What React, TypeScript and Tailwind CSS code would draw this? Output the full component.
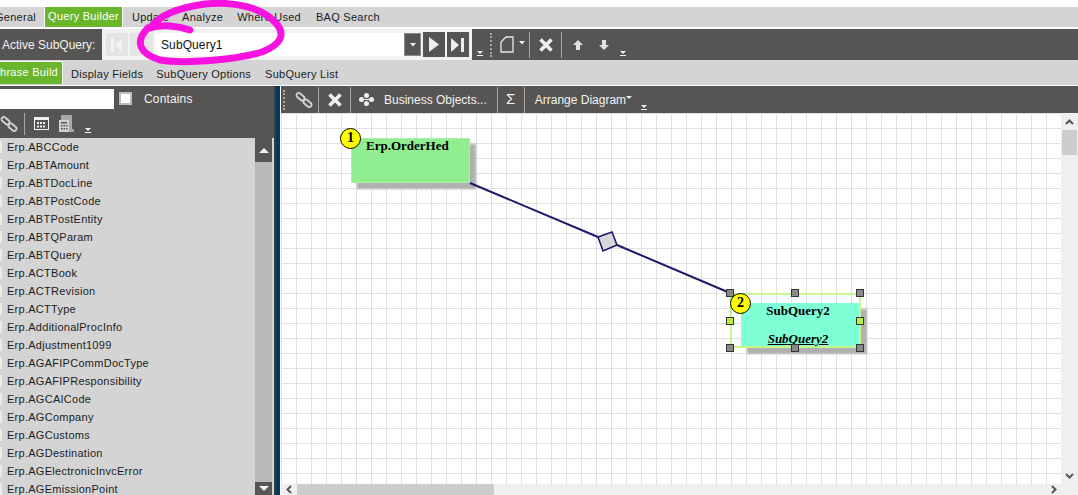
import React from "react";

const tables = [
  "Erp.ABCCode",
  "Erp.ABTAmount",
  "Erp.ABTDocLine",
  "Erp.ABTPostCode",
  "Erp.ABTPostEntity",
  "Erp.ABTQParam",
  "Erp.ABTQuery",
  "Erp.ACTBook",
  "Erp.ACTRevision",
  "Erp.ACTType",
  "Erp.AdditionalProcInfo",
  "Erp.Adjustment1099",
  "Erp.AGAFIPCommDocType",
  "Erp.AGAFIPResponsibility",
  "Erp.AGCAICode",
  "Erp.AGCompany",
  "Erp.AGCustoms",
  "Erp.AGDestination",
  "Erp.AGElectronicInvcError",
  "Erp.AGEmissionPoint",
];

const LinkIcon = () => (
  <svg width="18" height="18" viewBox="0 0 18 18" fill="none" stroke="#d4d4d4" strokeWidth="1.8">
    <rect x="1" y="3.5" width="9" height="4.5" rx="2.2" transform="rotate(40 5.5 5.75)" />
    <rect x="8" y="10" width="9" height="4.5" rx="2.2" transform="rotate(40 12.5 12.25)" />
  </svg>
);

const CloseIcon = () => (
  <svg width="14" height="14" viewBox="0 0 14 14" stroke="#eeeeee" strokeWidth="3.6">
    <path d="M1.5 1.5 L12.5 12.5 M12.5 1.5 L1.5 12.5" />
  </svg>
);

const MoreCaret = ({ className = "" }: { className?: string }) => (
  <svg width="6" height="5" viewBox="0 0 6 5" className={className} fill="#f2f2f2">
    <path d="M0 0 H6 L3 3 Z" />
    <rect x="0" y="4" width="6" height="1" />
  </svg>
);

const Sep = () => <div className="h-[26px] w-px bg-[#a8a6a4]" />;

const Handle = ({ pos, lime }: { pos: string; lime?: boolean }) => (
  <div
    className={`absolute h-[8px] w-[8px] border border-[#333] ${pos} ${lime ? "bg-[#b4f03c]" : "bg-[#8a8a8a]"}`}
  />
);

const Badge = ({ n, pos }: { n: number; pos: string }) => (
  <div
    className={`absolute flex h-[21px] w-[21px] items-center justify-center rounded-full border border-black bg-[#ffff00] pb-[2px] font-['Liberation_Serif',serif] text-[14px] font-bold tracking-normal text-black ${pos}`}
  >
    {n}
  </div>
);

export default function App() {
  return (
    <div className="relative flex h-[495px] w-[1078px] flex-col overflow-hidden bg-white pt-[7px] font-['Liberation_Sans',sans-serif] text-[11px] tracking-[0.27px] text-[#1c1c1c]">
      {/* Main tabs */}
      <div className="flex h-[20px] items-center bg-[#d4d4d4]">
        <span className="ml-[-5px] w-[49px] pt-[1px]">General</span>
        <div className="flex h-[20px] w-[79px] items-center justify-center border-x border-white bg-[#69b52b] pb-[2px] text-white">
          Query Builder
        </div>
        <span className="ml-[9px] pt-[1px]">Update</span>
        <span className="ml-[13px] pt-[1px]">Analyze</span>
        <span className="ml-[14px] pt-[1px]">Where Used</span>
        <span className="ml-[15px] pt-[1px]">BAQ Search</span>
      </div>

      {/* SubQuery toolbar */}
      <div className="mt-[2px] flex h-[31px] items-center bg-[#575553] text-[#f2f2f2]">
        <span className="ml-[2px] w-[100px] text-[12px] tracking-normal">Active SubQuery:</span>
        <div className="flex h-[31px] w-[370px] items-center bg-[#f1f1f1] pl-[4px]">
          <div className="flex h-[23px] w-[22px] items-center justify-center bg-[#e4e4e4]">
            <svg width="12" height="14" viewBox="0 0 12 14" fill="#f4f4f4">
              <path d="M0 0 H3 V14 H0 Z M11 0 V14 L4 7 Z" />
            </svg>
          </div>
          <div className="ml-[2px] h-[23px] w-[23px] bg-[#e4e4e4]" />
          <div className="ml-[2px] flex h-[23px] w-[249px] items-center bg-white pl-[6px] text-[12px] tracking-[0.1px] text-[#111]">
            SubQuery1
          </div>
          <div className="flex h-[23px] w-[17px] items-center justify-center border border-[#8a8a8a] bg-[#575553]">
            <svg width="6" height="4" viewBox="0 0 6 4" fill="#f2f2f2">
              <path d="M0 0 H6 L3 3.5 Z" />
            </svg>
          </div>
          <div className="ml-[2px] flex h-[25px] w-[22px] items-center justify-center bg-[#575553]">
            <svg width="12" height="15" viewBox="0 0 12 15" fill="#ededed">
              <path d="M1 0 L11 7.5 L1 15 Z" />
            </svg>
          </div>
          <div className="ml-[2px] flex h-[25px] w-[22px] items-center justify-center bg-[#575553]">
            <svg width="14" height="14" viewBox="0 0 14 14" fill="#ededed">
              <path d="M0 0 L8 7 L0 14 Z M10 0 H13 V14 H10 Z" />
            </svg>
          </div>
        </div>
        <MoreCaret className="ml-[5px] mt-[18px]" />
        <div className="ml-[7px] h-[24px] border-l-2 border-dotted border-[#a8a6a4]" />
        <svg width="14" height="17" viewBox="0 0 14 17" fill="none" stroke="#e8e8e8" strokeWidth="1.3" className="ml-[8px]">
          <path d="M1 6 L6 1 H13 V16 H1 Z" />
        </svg>
        <svg width="6" height="4" viewBox="0 0 6 4" fill="#f2f2f2" className="mb-[4px] ml-[5px]">
          <path d="M0 0 H6 L3 3.5 Z" />
        </svg>
        <div className="ml-[4px]"><Sep /></div>
        <div className="ml-[9px]"><CloseIcon /></div>
        <div className="ml-[8px]"><Sep /></div>
        <svg width="10" height="10" viewBox="0 0 10 10" fill="#e2e2e2" className="ml-[11px]">
          <path d="M5 0 L10 5 H7 V10 H3 V5 H0 Z" />
        </svg>
        <svg width="10" height="10" viewBox="0 0 10 10" fill="#e2e2e2" className="ml-[16px]">
          <path d="M5 10 L10 5 H7 V0 H3 V5 H0 Z" />
        </svg>
        <MoreCaret className="ml-[11px] mt-[18px]" />
      </div>

      {/* Sub tabs */}
      <div className="flex h-[25px] items-center bg-[#d4d4d4]">
        <div className="flex h-[23px] w-[63px] items-center justify-end rounded-tr-[2px] border-r border-t border-white bg-[#69b52b] pb-[2px] pr-[4px] whitespace-nowrap text-white">
          Phrase Build
        </div>
        <span className="ml-[8px] pt-[3px]">Display Fields</span>
        <span className="ml-[13px] pt-[3px]">SubQuery Options</span>
        <span className="ml-[14px] pt-[3px]">SubQuery List</span>
      </div>

      <div className="flex min-h-0 flex-1 pt-px">
        {/* Table list */}
        <div className="flex w-[274px] flex-col bg-[#575553]">
          <div className="flex h-[25px] items-center text-[#f2f2f2]">
            <div className="h-[20px] w-[114px] bg-white" />
            <div className="ml-[5px] h-[13px] w-[13px] border-2 border-[#bdbdbd] bg-white" />
            <span className="ml-[12px] text-[12px] tracking-[0.15px]">Contains</span>
          </div>
          <div className="flex h-[27px] items-center pb-[2px]">
            <LinkIcon />
            <div className="ml-[6px] h-[22px] w-px bg-[#a8a6a4]" />
            <svg width="15" height="13" viewBox="0 0 15 13" fill="none" stroke="#f0f0f0" className="ml-[9px]">
              <rect x="0.5" y="0.5" width="14" height="12" strokeWidth="1" />
              <path d="M1 2 H14" strokeWidth="2" />
              <path d="M3 6 H12 M3 9.5 H12" strokeDasharray="2 1" strokeWidth="2" />
            </svg>
            <svg width="17" height="17" viewBox="0 0 17 17" className="ml-[9px]" fill="#cfcfcf">
              <path d="M1 5 H11 V17 H1 Z" />
              <path d="M3 0 H14 V14 H16 V17 H11 V5 H3 Z" fill="#a9a9a9" />
              <path d="M3 7 H9 V8.5 H3 Z M3 10 H4.5 V11.5 H3 Z M5.5 10 H7 V11.5 H5.5 Z M8 10 H9.5 V11.5 H8 Z M3 13 H4.5 V14.5 H3 Z M5.5 13 H7 V14.5 H5.5 Z M8 13 H9.5 V14.5 H8 Z" fill="#575553" />
            </svg>
            <MoreCaret className="ml-[10px] mt-[14px]" />
          </div>
          <div className="flex min-h-0 flex-1 overflow-hidden bg-[#d4d4d4] pr-[2px]">
            <div className="flex-1 overflow-hidden">
              {tables.map((t) => (
                <div key={t} className="relative flex h-[18px] items-center pl-[7px] whitespace-nowrap">
                  <div className="absolute left-0 top-[3px] h-[12px] w-[2px] bg-[#ececec]" />
                  {t}
                </div>
              ))}
            </div>
            <div className="flex w-[17px] flex-col justify-between bg-[#b9b9b9]">
              <div className="flex h-[24px] items-center justify-center bg-[#575553]">
                <svg width="10" height="5" viewBox="0 0 10 5" fill="#f2f2f2"><path d="M0 5 L5 0 L10 5 Z" /></svg>
              </div>
              <div className="flex h-[13px] items-center justify-center bg-[#575553]">
                <svg width="10" height="5" viewBox="0 0 10 5" fill="#f2f2f2"><path d="M0 0 L10 0 L5 5 Z" /></svg>
              </div>
            </div>
          </div>
        </div>

        <div className="w-[2px] bg-[#3a3a3a]" />
        <div className="w-[4px] bg-[#003a5e]" />
        <div className="w-px bg-white" />

        {/* Diagram side */}
        <div className="flex min-w-0 flex-1 flex-col">
          <div className="flex h-[27px] items-center bg-[#575553] text-[12px] tracking-normal text-[#f2f2f2]">
            <div className="ml-[2px] h-[20px] border-l-2 border-dotted border-[#a8a6a4]" />
            <div className="ml-[10px]"><LinkIcon /></div>
            <div className="ml-[5px]"><Sep /></div>
            <div className="ml-[9px]"><CloseIcon /></div>
            <div className="ml-[8px]"><Sep /></div>
            <svg width="15" height="13" viewBox="0 0 15 13" fill="#f0f0f0" className="ml-[8px]">
              <circle cx="7.5" cy="2.5" r="2.5" />
              <circle cx="2.5" cy="6.5" r="2.5" />
              <circle cx="12.5" cy="6.5" r="2.5" />
              <circle cx="7.5" cy="10.5" r="2.5" />
              <path d="M2.5 6 H12.5 V7 H2.5 Z" />
            </svg>
            <span className="ml-[10px] whitespace-nowrap">Business Objects...</span>
            <div className="ml-[10px]"><Sep /></div>
            <span className="w-[26px] text-center text-[15px] font-light">Σ</span>
            <Sep />
            <span className="ml-[10px] whitespace-nowrap">Arrange Diagram</span>
            <svg width="6" height="3" viewBox="0 0 6 3" fill="#f2f2f2" className="mb-[4px]">
              <path d="M0 0 H6 L3 3 Z" />
            </svg>
            <MoreCaret className="ml-[9px] mt-[16px]" />
          </div>

          <div className="flex min-h-0 flex-1">
            <div className="flex min-w-0 flex-1 flex-col">
              <div className="relative min-h-0 flex-1 overflow-hidden bg-white bg-[linear-gradient(#e0e0e0_1px,transparent_1px),linear-gradient(90deg,#e0e0e0_1px,transparent_1px)] bg-[size:15px_15px]">
                {/* Node 1 */}
                <div className="absolute left-[70px] top-[25px] h-[45px] w-[119px] border border-[#a8f0a8] bg-[#90ee90] pl-[14px] font-['Liberation_Serif',serif] text-[13px] leading-[13px] font-bold tracking-normal text-black shadow-[6px_6px_2px_#b0b0b0]">
                  Erp.OrderHed
                </div>
                <Badge n={1} pos="left-[59px] top-[15px]" />

                {/* Node 2 */}
                <div className="absolute left-[460px] top-[190px] h-[45px] w-[120px] bg-[#7fffd4] pr-[6px] text-center font-['Liberation_Serif',serif] text-[13px] leading-[15px] font-bold tracking-normal text-black shadow-[6px_6px_2px_#b0b0b0]">
                  <div>SubQuery2</div>
                  <div className="mt-[13px] italic underline">SubQuery2</div>
                </div>

                <svg width="780" height="371" viewBox="0 0 780 371" className="absolute left-0 top-0" fill="none">
                  <path d="M189 70 L317 124 M336 132 L449 180" stroke="#1b1b6e" strokeWidth="2" />
                  <path d="M317 124 L331 119 L336 132 L322 138 Z" fill="#d8d8d8" stroke="#1b1b6e" strokeWidth="1.6" />
                </svg>

                <div className="absolute left-[449px] top-[180px] h-[55px] w-[131px] border-2 border-[#c8f58c]" />
                <Handle pos="left-[445px] top-[176px]" />
                <Handle pos="left-[510px] top-[176px]" />
                <Handle pos="left-[575px] top-[176px]" />
                <Handle pos="left-[445px] top-[204px]" lime />
                <Handle pos="left-[575px] top-[204px]" lime />
                <Handle pos="left-[445px] top-[231px]" />
                <Handle pos="left-[510px] top-[231px]" />
                <Handle pos="left-[575px] top-[231px]" />
                <Badge n={2} pos="left-[449px] top-[180px]" />
              </div>

              {/* Horizontal scrollbar */}
              <div className="flex h-[11px] bg-[#efefef]">
                <div className="flex w-[16px] items-center justify-center">
                  <svg width="6" height="9" viewBox="0 0 6 9" fill="none" stroke="#555" strokeWidth="2"><path d="M5 1 L1.5 4.5 L5 8" /></svg>
                </div>
                <div className="h-full w-[197px] bg-[#cdcdcd]" />
                <div className="flex-1" />
                <div className="flex w-[14px] items-center justify-center">
                  <svg width="6" height="9" viewBox="0 0 6 9" fill="none" stroke="#555" strokeWidth="2"><path d="M1 1 L4.5 4.5 L1 8" /></svg>
                </div>
              </div>
            </div>

            {/* Vertical scrollbar */}
            <div className="flex w-[17px] flex-col items-center bg-[#efefef]">
              <div className="flex h-[17px] items-center justify-center">
                <svg width="9" height="6" viewBox="0 0 9 6" fill="none" stroke="#555" strokeWidth="2"><path d="M1 5 L4.5 1.5 L8 5" /></svg>
              </div>
              <div className="h-[25px] w-[15px] bg-[#cdcdcd]" />
              <div className="flex-1" />
              <div className="mb-[11px] flex h-[17px] items-center justify-center">
                <svg width="9" height="6" viewBox="0 0 9 6" fill="none" stroke="#555" strokeWidth="2"><path d="M1 1 L4.5 4.5 L8 1" /></svg>
              </div>
            </div>
          </div>
        </div>
      </div>

      {/* Hand-drawn marker ring */}
      <svg width="300" height="75" viewBox="0 0 300 75" className="pointer-events-none absolute left-0 top-0" fill="none">
        <path
          d="M190 30 C178 26 162 24 150 28 C158 17 175 8 205 4 C235 1 262 8 275 22 C286 34 282 44 262 52 C235 60 185 64 160 60 C140 54 134 42 148 28"
          stroke="#f812e0"
          strokeWidth="7"
          strokeLinecap="round"
          strokeLinejoin="round"
        />
      </svg>
    </div>
  );
}
